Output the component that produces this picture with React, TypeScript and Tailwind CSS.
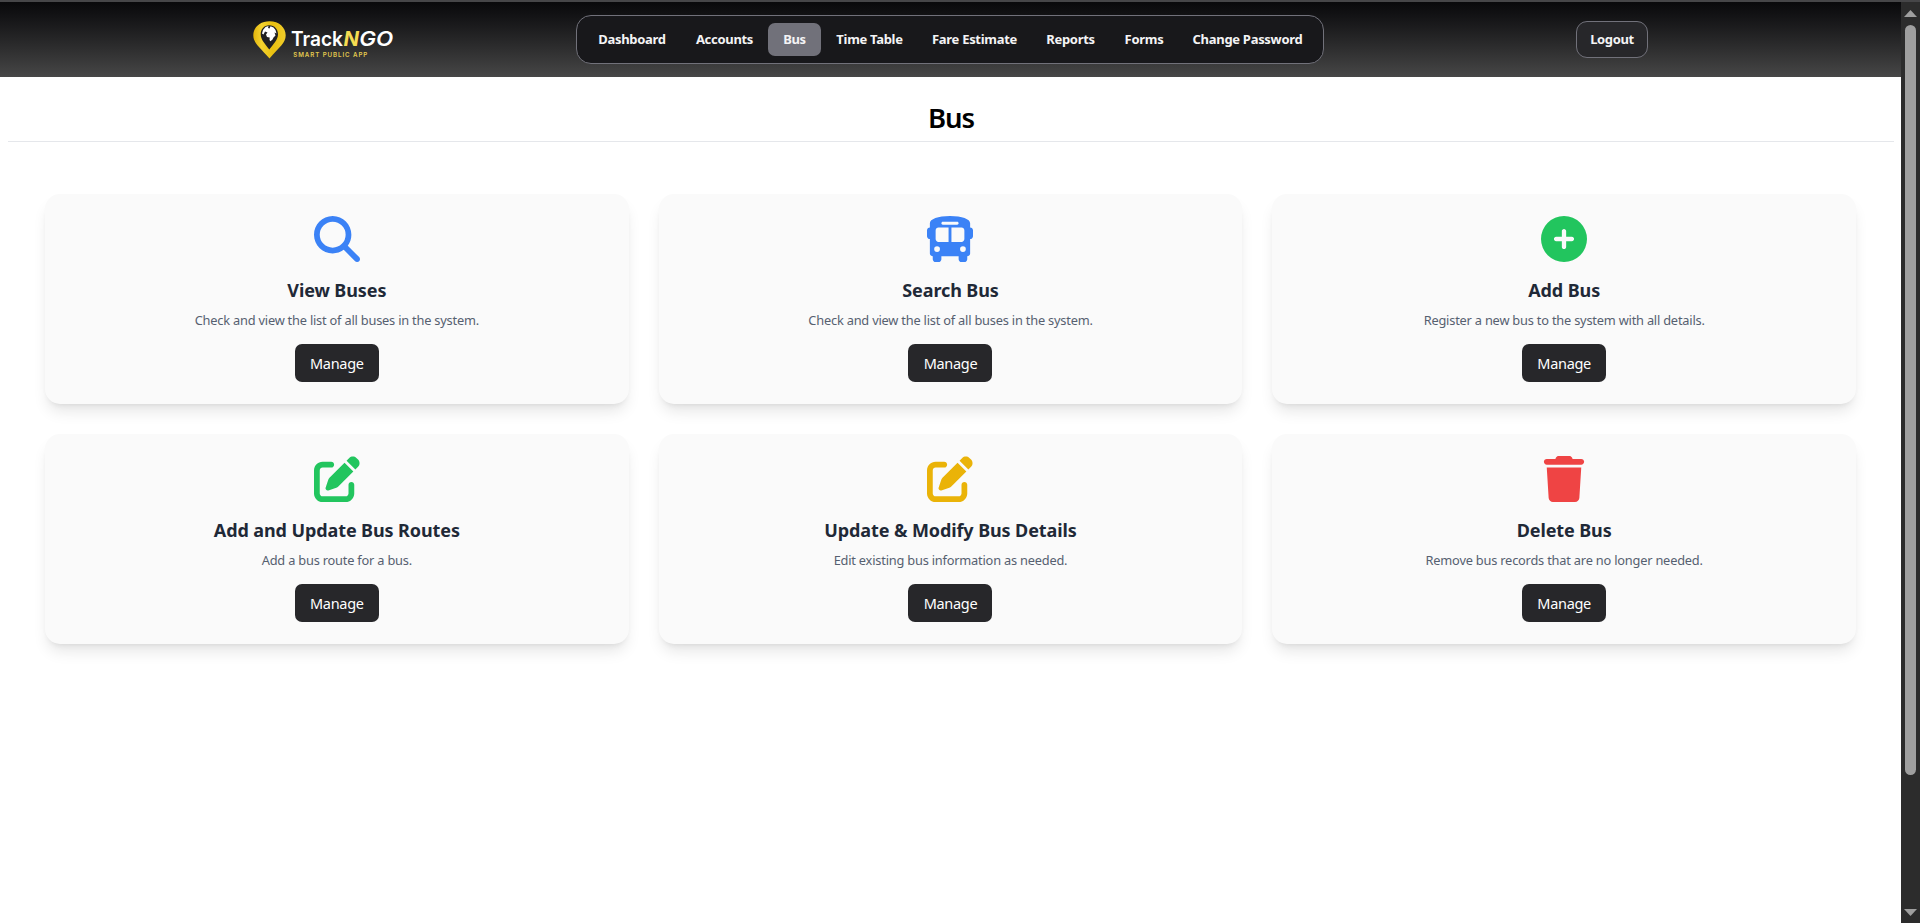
import React from "react";
import { FaMagnifyingGlass, FaBus, FaCirclePlus, FaPenToSquare, FaTrash } from "react-icons/fa6";

const nav = [
  { label: "Dashboard", w: "w-[98px]" },
  { label: "Accounts", w: "w-[87px]" },
  { label: "Bus", w: "w-[53px]", active: true },
  { label: "Time Table", w: "w-[97px]" },
  { label: "Fare Estimate", w: "w-[113px]" },
  { label: "Reports", w: "w-[79px]" },
  { label: "Forms", w: "w-[68px]" },
  { label: "Change Password", w: "w-[139px]" },
];

const cards = [
  { icon: FaMagnifyingGlass, color: "w-[46px] text-[#3b82f6]", title: "View Buses", text: "Check and view the list of all buses in the system." },
  { icon: FaBus, color: "w-[52px] text-[#3b82f6]", title: "Search Bus", text: "Check and view the list of all buses in the system." },
  { icon: FaCirclePlus, color: "w-[46px] text-[#22c55e]", title: "Add Bus", text: "Register a new bus to the system with all details." },
  { icon: FaPenToSquare, color: "w-[46px] text-[#22c55e]", title: "Add and Update Bus Routes", text: "Add a bus route for a bus." },
  { icon: FaPenToSquare, color: "w-[46px] text-[#eab308]", title: "Update & Modify Bus Details", text: "Edit existing bus information as needed." },
  { icon: FaTrash, color: "w-[46px] text-[#ef4444]", title: "Delete Bus", text: "Remove bus records that are no longer needed." },
];

function Logo() {
  return (
    <svg width="150" height="46" viewBox="0 0 150 46" className="block">
      <defs>
        <linearGradient id="pin" x1="0" y1="0" x2="1" y2="0">
          <stop offset="0" stopColor="#e3b50c" />
          <stop offset="0.25" stopColor="#f4d22f" />
          <stop offset="0.6" stopColor="#e9c010" />
          <stop offset="1" stopColor="#f0cc2a" />
        </linearGradient>
      </defs>
      <path d="M19.500 4.300C10 4.300 3.300 10.500 3.300 18.300C3.300 26 9.500 30 19.500 41.500C29.500 30 35.700 26 35.700 18.300C35.700 10.500 29 4.300 19.500 4.300Z" fill="url(#pin)" />
      <path d="M19.300 8.300C14 8.300 10.700 12.500 10.700 17.300C10.700 22.500 15 27 19.300 32.500C23.600 27 28 22.500 28 17.300C28 12.500 24.600 8.300 19.300 8.300Z" fill="#202022" />
      <path d="M12 16.500L13 13L15.500 10L18.500 9L18 11L19.500 11.500L20.500 9.200L23.500 10.500L25.500 13L26.500 16.500L24.500 15.500L25.500 18.500L23.500 20.500L22.500 22.500L20.500 24.300L19.500 23L19.700 20.500L17 20L16 17.500L17.500 15.500L15 14.500L13.500 17.500Z" fill="#fff" />
      <g fontFamily="Inter, Lato, sans-serif" fontSize="20" fontWeight="600">
        <text x="41" y="28.700" fill="#fff" textLength="52" lengthAdjust="spacingAndGlyphs">Track</text>
        <text x="93.400" y="28.700" fill="#f5dc52" fontStyle="italic" fontWeight="700" textLength="15.500" lengthAdjust="spacingAndGlyphs">N</text>
        <text x="109.300" y="28.700" fill="#fff" fontStyle="italic" textLength="34" lengthAdjust="spacingAndGlyphs">GO</text>
      </g>
      <text x="43.300" y="40.400" fill="#e3c94f" fontFamily="Inter, sans-serif" fontSize="6.200" fontWeight="600" textLength="74">SMART PUBLIC APP</text>
    </svg>
  );
}

export default function App() {
  return (
    <div className="flex h-[923px] flex-col overflow-hidden bg-white font-['Noto_Sans','Open_Sans',sans-serif]">
      <div className="h-[2px] shrink-0 bg-[#464648]" />
      <div className="flex min-h-0 flex-1">
        <div className="w-[1901px]">
          <header className="flex h-[75px] items-center bg-gradient-to-b from-[#09090b] to-[#474747] text-[13px] font-bold text-[#f4f4f5]">
            <div className="ml-[250px] w-[326px]"><Logo /></div>
            <nav className="flex h-[49px] w-[748px] items-center justify-center rounded-[15px] border border-[#71717a] bg-[#18181b]">
              {nav.map((n) => (
                <a key={n.label} className={`flex h-[33px] items-center justify-center whitespace-nowrap rounded-[7px] tracking-[-0.3px] ${n.w} ${n.active ? "bg-[#71717a]" : ""}`}>{n.label}</a>
              ))}
            </nav>
            <button className="ml-[252px] h-[37px] w-[72px] rounded-[11px] border border-[#71717a] bg-[#27272a] tracking-[-0.35px]">Logout</button>
          </header>
          <h1 className="ml-[8px] mr-[7px] flex h-[65px] items-end justify-center border-b border-[#e5e7eb] pb-[4px] text-[27.5px] font-semibold leading-[38px] tracking-[-1px] text-black">Bus</h1>
          <main className="grid grid-cols-3 gap-[30px] px-[45px] pt-[52px]">
            {cards.map(({ icon: Icon, color, title, text }) => (
              <section key={title} className="flex h-[210px] flex-col items-center rounded-[15px] bg-[#fafafa] pt-[22px] shadow-[0_10px_15px_-3px_rgba(0,0,0,0.1),0_4px_6px_-4px_rgba(0,0,0,0.1)]">
                <Icon className={`h-[46px] shrink-0 ${color}`} />
                <h2 className="mt-[14.5px] text-[18px] font-bold leading-[26.25px] tracking-[-0.1px] text-[#1f2937]">{title}</h2>
                <p className="mt-[8.5px] text-[12.8px] leading-[18.75px] tracking-[-0.2px] text-[#566070]">{text}</p>
                <button className="mt-[14px] h-[37.5px] w-[84px] rounded-[7px] bg-[#27272a] pt-[2px] text-[14.5px] tracking-[-0.3px] text-white">Manage</button>
              </section>
            ))}
          </main>
        </div>
        <div className="flex w-[19px] flex-col items-center bg-[#2c2c2c]">
          <svg width="13" height="7" viewBox="0 0 13 7" className="mt-[8px] shrink-0"><path d="M0 7L6.500 0L13 7Z" fill="#9f9f9f" /></svg>
          <div className="mt-[8px] h-[750px] w-[11px] shrink-0 rounded-full bg-[#9f9f9f]" />
          <svg width="13" height="7" viewBox="0 0 13 7" className="mb-[7px] mt-auto shrink-0"><path d="M0 0L6.500 7L13 0Z" fill="#9f9f9f" /></svg>
        </div>
      </div>
    </div>
  );
}
